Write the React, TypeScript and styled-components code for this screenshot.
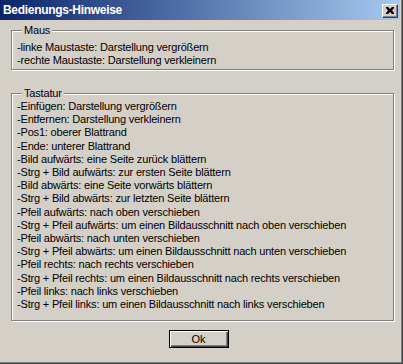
import React from "react";
import styled, { createGlobalStyle } from "styled-components";

const Global = createGlobalStyle`
  html, body { margin: 0; padding: 0; background: #d4d0c8; }
  body { font-family: "Liberation Sans", Arial, sans-serif; }
`;

const mausLines = [
  "-linke Maustaste: Darstellung vergrößern",
  "-rechte Maustaste: Darstellung verkleinern",
];

const tastaturLines = [
  "-Einfügen: Darstellung vergrößern",
  "-Entfernen: Darstellung verkleinern",
  "-Pos1: oberer Blattrand",
  "-Ende: unterer Blattrand",
  "-Bild aufwärts: eine Seite zurück blättern",
  "-Strg + Bild aufwärts: zur ersten Seite blättern",
  "-Bild abwärts: eine Seite vorwärts blättern",
  "-Strg + Bild abwärts: zur letzten Seite blättern",
  "-Pfeil aufwärts: nach oben verschieben",
  "-Strg + Pfeil aufwärts: um einen Bildausschnitt nach oben verschieben",
  "-Pfeil abwärts: nach unten verschieben",
  "-Strg + Pfeil abwärts: um einen Bildausschnitt nach unten verschieben",
  "-Pfeil rechts: nach rechts verschieben",
  "-Strg + Pfeil rechts: um einen Bildausschnitt nach rechts verschieben",
  "-Pfeil links: nach links verschieben",
  "-Strg + Pfeil links: um einen Bildausschnitt nach links verschieben",
];

export default function App() {
  return (
    <>
      <Global />
      <Window>
        <TitleBar>
          <Title>Bedienungs-Hinweise</Title>
          <CloseButton>
            <svg width="8" height="7" viewBox="0 0 8 7">
              <path d="M0 0h2l2 2 2-2h2v1L6 3.5 8 6v1H6L4 5 2 7H0V6l2-2.5L0 1z" fill="#000" />
            </svg>
          </CloseButton>
        </TitleBar>
        <Body>
          <Group $height={46} $top={5} $lh={13}>
            <Legend>Maus</Legend>
            {mausLines.map((line) => (
              <Line key={line}>{line}</Line>
            ))}
          </Group>
          <Group $height={234} $gap={17} $top={1} $lh={13.2}>
            <Legend>Tastatur</Legend>
            {tastaturLines.map((line) => (
              <Line key={line}>{line}</Line>
            ))}
          </Group>
          <ButtonRow>
            <OkButton>Ok</OkButton>
          </ButtonRow>
        </Body>
      </Window>
    </>
  );
}

const Window = styled.div`
  width: 403px;
  height: 364px;
  box-sizing: border-box;
  background: #d4d0c8;
  border-right: 1px solid #404040;
  border-bottom: 1px solid #404040;
  box-shadow: inset -1px -1px 0 #808080;
  display: flex;
  flex-direction: column;
  overflow: hidden;
`;

const TitleBar = styled.div`
  height: 20px;
  margin-right: 2px;
  background: linear-gradient(to right, #0a246a, #a6caf0);
  display: flex;
  align-items: center;
  justify-content: space-between;
  padding: 0 2px 0 3px;
`;

const Title = styled.div`
  color: #fff;
  font-weight: bold;
  font-size: 12px;
  letter-spacing: -0.3px;
`;

const CloseButton = styled.div`
  width: 16px;
  height: 14px;
  box-sizing: border-box;
  background: #d4d0c8;
  border-top: 1px solid #fff;
  border-left: 1px solid #fff;
  border-right: 1px solid #404040;
  border-bottom: 1px solid #404040;
  box-shadow: inset -1px -1px 0 #808080;
  display: flex;
  align-items: center;
  justify-content: center;
  margin-top: 1px;
`;

const Body = styled.div`
  padding: 4px 8px 0 11px;
  display: flex;
  flex-direction: column;
`;

const Group = styled.fieldset<{ $height: number; $gap?: number; $top: number; $lh: number }>`
  margin: ${(p) => p.$gap ?? 0}px 0 0 0;
  padding: ${(p) => p.$top}px 5px 0;
  width: 383px;
  height: ${(p) => p.$height}px;
  box-sizing: border-box;
  border: 1px solid #808080;
  box-shadow: inset 1px 1px 0 #fff, 1px 1px 0 #fff;
  font-size: 11px;
  line-height: ${(p) => p.$lh}px;
  letter-spacing: -0.18px;
  color: #000;
`;

const Legend = styled.legend`
  margin-left: 5px;
  padding: 0 2px;
  background: #d4d0c8;
  font-size: 11px;
  line-height: 12px;
`;

const Line = styled.div`
  white-space: nowrap;
`;

const ButtonRow = styled.div`
  display: flex;
  justify-content: center;
  padding-top: 9px;
  padding-right: 8px;
`;

const OkButton = styled.button`
  width: 60px;
  height: 18px;
  box-sizing: border-box;
  padding: 0;
  background: #d4d0c8;
  border: 1px solid #000;
  box-shadow: inset 1px 1px 0 #fff, inset -1px -1px 0 #404040, inset -2px -2px 0 #808080;
  font-family: "Liberation Sans", Arial, sans-serif;
  font-size: 11px;
  color: #000;
`;
